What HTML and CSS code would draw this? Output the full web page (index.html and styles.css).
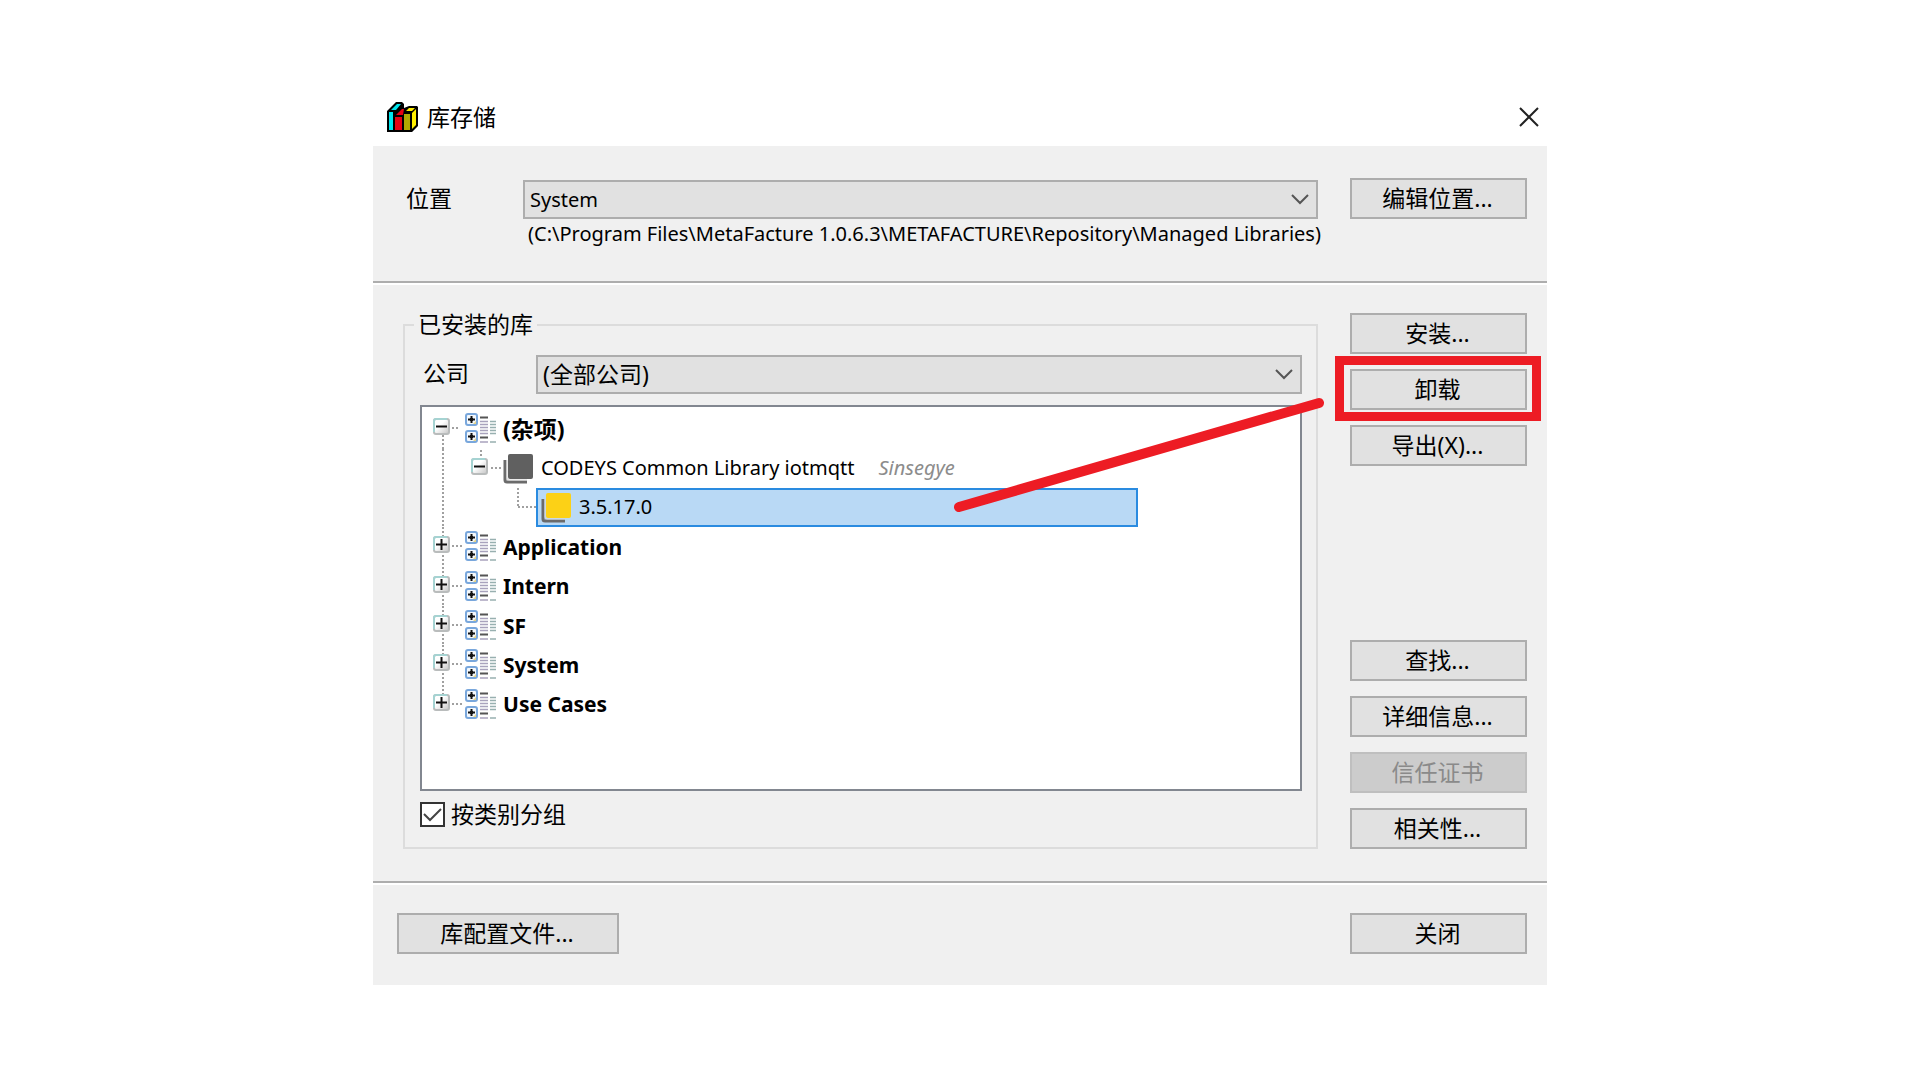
FILE: index.html
```html
<!DOCTYPE html>
<html lang="zh-CN">
<head>
  <meta charset="UTF-8">
  <meta name="viewport" content="width=device-width, initial-scale=1.0">
  <title>库存储</title>
  <link rel="stylesheet" href="styles.css">
</head>
<body>
  <svg class="defs" width="0" height="0" aria-hidden="true">
    <defs>
      <linearGradient id="boxFill" x1="0" y1="0" x2="1" y2="1">
        <stop offset="0.4" stop-color="#fff"/>
        <stop offset="1" stop-color="#c4c4c4"/>
      </linearGradient>
      <symbol id="minus" viewBox="0 0 17 17">
        <rect x="1" y="1" width="15" height="15" rx="2" fill="url(#boxFill)" stroke="#b9bcbc" stroke-width="2"/>
        <path d="M1 14V3a2 2 0 0 1 2-2h11" fill="none" stroke="#a5d3d2" stroke-width="2"/>
        <path d="M3 8.500h11" stroke="#111" stroke-width="2"/>
      </symbol>
      <symbol id="plus" viewBox="0 0 17 17">
        <use href="#minus"/>
        <path d="M8.500 3v11" stroke="#111" stroke-width="2"/>
      </symbol>
      <symbol id="node" viewBox="0 0 13 13">
        <rect x="1" y="1" width="11" height="11" rx="2" fill="#f4f8fc" stroke="#79a7dc" stroke-width="2"/>
        <path d="M8 11h3V8z" fill="#e5d58a"/>
        <path d="M3 6.500h7M6.500 3v7" stroke="#111" stroke-width="2"/>
        <rect x="5" y="5" width="3" height="3" fill="#111"/>
      </symbol>
      <symbol id="category" viewBox="0 0 31 31">
        <use href="#node" width="13" height="13"/>
        <use href="#node" y="17" width="13" height="13"/>
        <path d="M15 4.500h8M15 24.500h8" stroke="#555" stroke-width="2"/>
        <path d="M15 8.500h8M15 11.500h8M15 14.500h8M15 17.500h8M15 20.500h8M15 29h8" stroke="#a9a3bd" stroke-width="1.500"/>
        <path d="M25 8.500h6M25 11.500h6M25 14.500h6M25 17.500h6M25 20.500h6M25 29h6" stroke="#98b0b0" stroke-width="1.500"/>
      </symbol>
      <symbol id="library" viewBox="0 0 31 31">
        <path d="M2 7v20a2 2 0 0 0 2 2h20" fill="none" stroke="#6b6b6b" stroke-width="3"/>
        <path d="M4 7v18a2 2 0 0 0 2 2h18" fill="none" stroke="#d8d8d8" stroke-width="1"/>
        <rect x="5" y="1" width="25" height="25" rx="2" fill="currentColor"/>
      </symbol>
    </defs>
  </svg>

  <div class="dialog" role="dialog" aria-labelledby="title">
    <header class="title-bar">
      <svg class="app-icon" width="31" height="31" viewBox="0 0 31 31" aria-hidden="true">
        <path d="M0 9L9 0h6l2 2v4l5-2h8l1 1v19l-6 6H0z" fill="#000"/>
        <path d="M2 10h4v18H2z" fill="#00e5ee"/>
        <path d="M4 8l6-6h4L9 8z" fill="#00e5ee"/>
        <path d="M8 15h7v13H8z" fill="#e60012"/>
        <path d="M9 13l6-6h2l-1 6z" fill="#e60012"/>
        <path d="M17 12h6v16h-6z" fill="#b0a800"/>
        <path d="M25 11l4-4v16l-4 4zM19 9l3-3h6l-3 3z" fill="#ffee00"/>
      </svg>
      <h1 id="title">库存储</h1>
      <button class="close-button" aria-label="关闭窗口">
        <svg width="20" height="20" viewBox="0 0 20 20"><path d="M1 1l18 18M19 1L1 19" stroke="#222" stroke-width="2"/></svg>
      </button>
    </header>

    <section class="location">
      <label for="location">位置</label>
      <div class="location-field">
        <select id="location" class="latin">
          <option>System</option>
        </select>
        <p class="path">(C:\Program Files\MetaFacture 1.0.6.3\METAFACTURE\Repository\Managed Libraries)</p>
      </div>
      <button>编辑位置...</button>
    </section>

    <section class="installed">
      <fieldset>
        <legend>已安装的库</legend>
        <div class="company">
          <label for="company">公司</label>
          <select id="company">
            <option>(全部公司)</option>
          </select>
        </div>
        <ul class="tree" role="tree">
          <li class="group">
            <svg width="43" height="39"><path class="dots" d="M21 26v14M30 19h8"/><use href="#minus" x="11" y="9" width="17" height="17"/></svg>
            <svg width="31" height="31"><use href="#category"/></svg>
            <span class="cjk">(杂项)</span>
          </li>
          <li>
            <svg width="81" height="39"><path class="dots" d="M21 0v40M59 1v9M69 19h10"/><use href="#minus" x="49" y="9" width="17" height="17"/></svg>
            <svg class="gray" width="31" height="31"><use href="#library"/></svg>
            <span>CODEYS Common Library iotmqtt</span>
            <em>Sinsegye</em>
          </li>
          <li>
            <svg width="114" height="39"><path class="dots" d="M21 0v40M96 0v19M96 19h18"/></svg>
            <div class="selected">
              <svg class="yellow" width="31" height="31"><use href="#library"/></svg>
              <span>3.5.17.0</span>
            </div>
          </li>
          <li class="group">
            <svg width="43" height="39"><path class="dots" d="M21 0v40M30 19h11"/><use href="#plus" x="11" y="9" width="17" height="17"/></svg>
            <svg width="31" height="31"><use href="#category"/></svg>
            <span>Application</span>
          </li>
          <li class="group">
            <svg width="43" height="39"><path class="dots" d="M21 0v40M30 19h11"/><use href="#plus" x="11" y="9" width="17" height="17"/></svg>
            <svg width="31" height="31"><use href="#category"/></svg>
            <span>Intern</span>
          </li>
          <li class="group">
            <svg width="43" height="39"><path class="dots" d="M21 0v40M30 19h11"/><use href="#plus" x="11" y="9" width="17" height="17"/></svg>
            <svg width="31" height="31"><use href="#category"/></svg>
            <span>SF</span>
          </li>
          <li class="group">
            <svg width="43" height="39"><path class="dots" d="M21 0v40M30 19h11"/><use href="#plus" x="11" y="9" width="17" height="17"/></svg>
            <svg width="31" height="31"><use href="#category"/></svg>
            <span>System</span>
          </li>
          <li class="group">
            <svg width="43" height="39"><path class="dots" d="M21 0v9M30 19h11"/><use href="#plus" x="11" y="9" width="17" height="17"/></svg>
            <svg width="31" height="31"><use href="#category"/></svg>
            <span>Use Cases</span>
          </li>
        </ul>
        <div class="check">
          <input type="checkbox" id="byCategory" checked>
          <label for="byCategory">按类别分组</label>
        </div>
      </fieldset>

      <div class="actions">
        <button>安装...</button>
        <div class="marked"><button>卸载</button></div>
        <button>导出(X)...</button>
        <button class="lower">查找...</button>
        <button>详细信息...</button>
        <button disabled>信任证书</button>
        <button>相关性...</button>
      </div>

      <svg class="pointer" width="380" height="124" viewBox="0 0 380 124" aria-hidden="true">
        <path d="M10 114L370 10" stroke="#ed1c24" stroke-width="10" stroke-linecap="round"/>
      </svg>
    </section>

    <footer>
      <button class="profile">库配置文件...</button>
      <button>关闭</button>
    </footer>
  </div>
</body>
</html>
```
FILE: styles.css
```css
* {
  box-sizing: border-box;
}
body {
  margin: 0;
  padding: 90px 373px;
  background-color: #fff;
  color: #000;
  font-family: "Noto Sans", "Noto Sans CJK SC", sans-serif;
  font-size: 23px;
  line-height: 30px;
}
.defs {
  display: block;
}
.dialog {
  background-color: #f0f0f0;
}
.title-bar {
  display: flex;
  align-items: center;
  height: 56px;
  padding: 0 0 2px 14px;
  background-color: #fff;
}
.title-bar h1 {
  margin: 0 auto 0 9px;
  font-size: 23px;
  font-weight: normal;
}
button {
  width: 177px;
  height: 41px;
  padding: 0 2px 2px 0;
  border: 2px solid #adadad;
  background-color: #e1e1e1;
  color: #000;
  font: inherit;
}
button:disabled {
  border-color: #bfbfbf;
  background-color: #ccc;
  color: #8a8a8a;
}
.close-button {
  display: grid;
  place-items: center;
  width: 36px;
  padding: 0;
  border: none;
  background-color: transparent;
}
select {
  width: 100%;
  height: 39px;
  padding: 0 5px;
  border: 2px solid #adadad;
  border-radius: 0;
  appearance: none;
  background: #e1e1e1 url("data:image/svg+xml,%3Csvg xmlns='http://www.w3.org/2000/svg' width='18' height='11'%3E%3Cpath d='M1 1l8 8 8-8' fill='none' stroke='%23555' stroke-width='2'/%3E%3C/svg%3E") no-repeat right 7px center;
  color: #000;
  font: inherit;
}
.latin, .path, .tree {
  font-size: 20px;
}
.location {
  display: flex;
  align-items: flex-start;
  gap: 32px;
  padding: 32px 20px 32px 33px;
}
.location > label {
  width: 85px;
  padding-top: 5px;
}
.location-field {
  flex: 1;
  min-width: 0;
  padding-top: 2px;
}
.path {
  margin: 0 0 0 5px;
  white-space: nowrap;
}
.installed, footer {
  border-top: 2px solid #adadad;
  box-shadow: inset 0 2px #fff;
}
.installed {
  position: relative;
  display: flex;
  gap: 32px;
  padding: 30px 20px 32px 30px;
}
fieldset {
  flex: 1;
  margin: 0;
  padding: 18px 14px 20px 15px;
  border: 2px solid #dcdcdc;
}
legend {
  margin-left: -6px;
  padding: 0 4px 2px;
  line-height: 22px;
}
.company {
  display: flex;
  align-items: center;
}
.company label {
  flex: 0 0 116px;
  padding: 0 0 4px 3px;
}
.company select {
  padding-bottom: 2px;
}
.tree {
  display: grid;
  grid-template-rows: repeat(8, minmax(0, 1fr));
  height: 386px;
  margin: 11px 0;
  padding: 2px 0 65px;
  border: 2px solid #828790;
  background-color: #fff;
  list-style: none;
}
.tree li {
  display: flex;
  align-items: center;
}
.tree svg {
  flex: none;
  overflow: visible;
}
.tree span {
  margin-left: 7px;
}
.tree em {
  margin-left: 24px;
  color: #8c8c8c;
}
.group {
  font-size: 21px;
  font-weight: bold;
}
.tree .cjk {
  font-size: 23px;
}
.dots {
  fill: none;
  stroke: #a0a0a0;
  stroke-width: 2;
  stroke-dasharray: 2 2;
}
.gray {
  color: #606060;
}
.yellow {
  color: #fcd116;
}
.selected {
  display: flex;
  align-items: center;
  width: 602px;
  height: 39px;
  padding-left: 3px;
  border: 2px solid #2a8be0;
  background-color: #b9d9f5;
}
.check {
  display: flex;
  align-items: center;
  gap: 6px;
  height: 25px;
}
.check label {
  padding-bottom: 2px;
}
.check input {
  width: 25px;
  height: 25px;
  margin: 0;
  border: 2px solid #333;
  appearance: none;
  background: #fff;
}
.check input:checked {
  background: #fff url("data:image/svg+xml,%3Csvg xmlns='http://www.w3.org/2000/svg' width='21' height='21'%3E%3Cpath d='M2 10l6 6L19 5' fill='none' stroke='%23444' stroke-width='2'/%3E%3C/svg%3E") no-repeat center;
}
.actions {
  display: flex;
  flex-direction: column;
  gap: 15px;
}
.actions .lower {
  margin-top: auto;
}
.marked {
  position: relative;
  display: flex;
}
.marked::after {
  content: "";
  position: absolute;
  inset: -13px -14px -11px -15px;
  border: 9px solid #ed1c24;
  pointer-events: none;
}
.pointer {
  position: absolute;
  top: 110px;
  right: 218px;
  pointer-events: none;
}
footer {
  display: flex;
  justify-content: space-between;
  padding: 30px 20px 31px 24px;
}
.profile {
  width: 222px;
}
```
